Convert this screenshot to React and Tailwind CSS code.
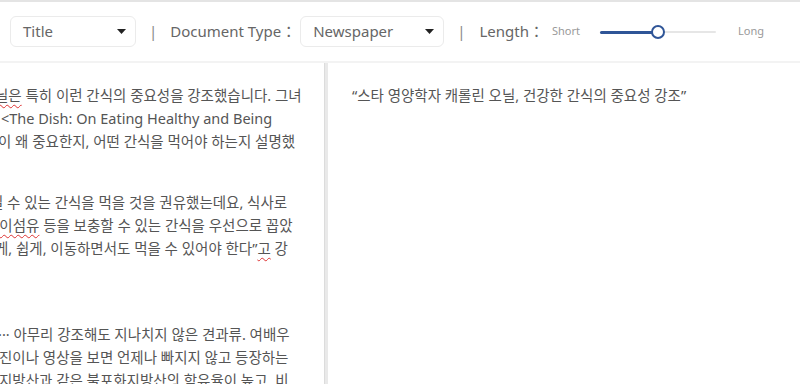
import React from 'react';

const font = { fontFamily: '"Noto Sans", "Noto Sans CJK KR", sans-serif' };

const Caret = () => (
    <svg width="9" height="5" viewBox="0 0 9 5" className="shrink-0">
        <path d="M0 0 L9 0 L4.5 5 Z" fill="#222" />
    </svg>
);

const Select = ({ label, width }) => (
    <div className={`flex items-center justify-between h-[31px] rounded-md border border-[#ebebeb] pl-[12px] pr-[9px] ${width}`}>
        <span className="text-[15px] text-[#666]">{label}</span>
        <Caret />
    </div>
);

const Squiggle = ({ children }) => (
    <span className="underline decoration-wavy decoration-[#d33] decoration-1 underline-offset-[3px]">{children}</span>
);

// left pane is scrolled sideways, so each line starts partly hidden
const leftParagraphs = [
    {
        mt: 'mt-[21px]',
        lines: [
            { ml: 'ml-[-5px]', text: <><Squiggle>닐은</Squiggle> 특히 이런 간식의 중요성을 강조했습니다. 그녀</> },
            { ml: 'ml-[1px]', text: '<The Dish: On Eating Healthy and Being' },
            { ml: 'ml-[-2px]', text: '이 왜 중요한지, 어떤 간식을 먹어야 하는지 설명했' },
        ],
    },
    {
        mt: 'mt-[38px]',
        lines: [
            { ml: 'ml-[-10px]', text: '길 수 있는 간식을 먹을 것을 권유했는데요, 식사로' },
            { ml: 'ml-[-14px]', text: <>식<Squiggle>이섬유</Squiggle> 등을 보충할 수 있는 간식을 우선으로 꼽았</> },
            { ml: 'ml-[-5px]', text: <>게, 쉽게, 이동하면서도 먹을 수 있어야 한다”<Squiggle>고</Squiggle> 강</> },
        ],
    },
    {
        mt: 'mt-[63px]',
        lines: [
            { ml: 'ml-[-2px]', text: '··· 아무리 강조해도 지나치지 않은 견과류. 여배우' },
            { ml: 'ml-[-1px]', text: '진이나 영상을 보면 언제나 빠지지 않고 등장하는' },
            { ml: 'ml-[-1px]', text: '지방산과 같은 불포화지방산의 함유율이 높고, 비' },
        ],
    },
];

export default function App() {
    return (
        <div className="w-[800px] h-[384px] overflow-hidden bg-white border-t-2 border-[#e4e4e4] flex flex-col" style={font}>
            {/* toolbar */}
            <div className="h-[61px] shrink-0 flex items-center border-b-2 border-[#f3f3f3] text-[#666]">
                <div className="ml-[10px]">
                    <Select label="Title" width="w-[126px]" />
                </div>
                <span className="ml-[13px] text-[15px] text-[#888]">|</span>
                <span className="ml-[13px] text-[15px]">Document Type：</span>
                <div className="ml-[4px]">
                    <Select label="Newspaper" width="w-[144px]" />
                </div>
                <span className="ml-[13px] text-[15px] text-[#888]">|</span>
                <span className="ml-[14px] text-[15px]">Length：</span>
                <span className="ml-[8px] text-[11px] text-[#999]">Short</span>
                <div className="ml-[20px] relative w-[116px] h-[14px] flex items-center">
                    <div className="w-full h-[2px] bg-[#e6e6e6] rounded-full" />
                    <div className="absolute left-0 top-[6px] w-[54px] h-[3px] bg-[#2f5597] rounded-full" />
                    <div className="absolute left-[51px] top-0 w-[14px] h-[14px] rounded-full border-2 border-[#2f5597] bg-white" />
                </div>
                <span className="ml-[22px] text-[11px] text-[#999]">Long</span>
            </div>

            {/* body */}
            <div className="flex-1 flex min-h-0">
                <div className="w-[324px] shrink-0 overflow-hidden text-[14.5px] leading-[23px] text-[#555]">
                    {leftParagraphs.map((p, i) => (
                        <div key={i} className={p.mt}>
                            {p.lines.map((l, j) => (
                                <div key={j} className={`whitespace-nowrap ${l.ml}`}>{l.text}</div>
                            ))}
                        </div>
                    ))}
                </div>
                <div className="w-[4px] shrink-0 bg-[#e9e9e9] border-l border-[#dcdcdc]" />
                <div className="flex-1 pl-[24px] pt-[21px] text-[14.5px] leading-[23px] text-[#555]">
                    “스타 영양학자 캐롤린 오닐, 건강한 간식의 중요성 강조”
                </div>
            </div>
        </div>
    );
}
